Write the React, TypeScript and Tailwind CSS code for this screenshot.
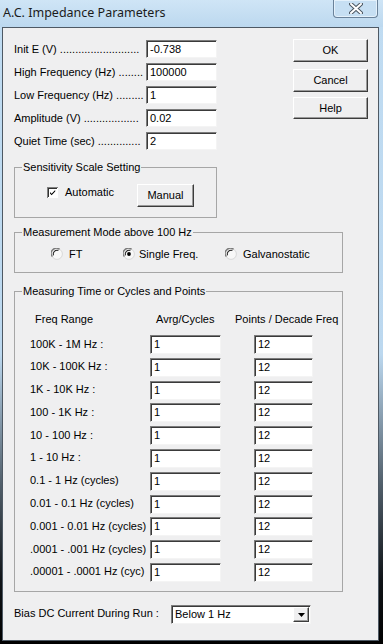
import React, { FC } from 'react';

const sunken =
    'bg-white border border-t-[#7c7c7c] border-l-[#7c7c7c] border-b-[#f4f4f4] border-r-[#f4f4f4] shadow-[inset_1px_1px_0_#3a3a3a]';
const raised =
    'border border-t-white border-l-white border-b-[#3c3c3c] border-r-[#3c3c3c] shadow-[inset_-1px_-1px_0_#9a9a9a]';

const Field: FC<{ value: string; className: string }> = ({ value, className }) => (
    <div className={`${sunken} ${className} h-[19px] flex items-center pl-[3px] text-[11px] leading-none text-black`}>{value}</div>
);

const Button: FC<{ label: string; className: string }> = ({ label, className }) => (
    <div className={`${raised} ${className} flex items-center justify-center text-[11px] text-black bg-[#efeff0]`}>{label}</div>
);

const Radio: FC<{ checked?: boolean }> = ({ checked }) => (
    <svg width="12" height="12" viewBox="0 0 12 12" className="shrink-0">
        <circle cx="6" cy="6" r="5.4" fill="#f8f8f8" stroke="#d8d8d8" strokeWidth="1" />
        <path d="M1.3 8.6 A5.2 5.2 0 0 1 8.6 1.3" fill="none" stroke="#7a7a7a" strokeWidth="1.3" />
        <path d="M2.4 7.4 A4 4 0 0 1 7.4 2.4" fill="none" stroke="#202020" strokeWidth="1.1" />
        {checked && <circle cx="6" cy="6" r="1.9" fill="#000" />}
    </svg>
);

const Checkbox: FC = () => (
    <svg width="11" height="11" viewBox="0 0 11 11" className="shrink-0">
        <rect x="0" y="0" width="11" height="11" fill="#808080" />
        <rect x="1" y="1" width="10" height="10" fill="#ffffff" />
        <rect x="1" y="1" width="9" height="9" fill="#303030" />
        <rect x="2" y="2" width="8" height="8" fill="#ffffff" />
        <path d="M3 5 L4.6 6.7 L8.2 3 L8.2 4.6 L4.6 8.3 L3 6.6 Z" fill="#000" />
    </svg>
);

const Legend: FC<{ text: string }> = ({ text }) => (
    <legend className="ml-[7px] px-[1px] text-[11px] leading-[14px] text-black whitespace-nowrap">{text}</legend>
);

const topRows = [
    ['Init E (V)', '-0.738', 26],
    ['High Frequency (Hz)', '100000', 8],
    ['Low Frequency (Hz)', '1', 9],
    ['Amplitude (V)', '0.02', 18],
    ['Quiet Time (sec)', '2', 14],
] as const;

const freqRows = [
    '100K - 1M Hz :',
    '10K - 100K Hz :',
    '1K - 10K Hz :',
    '100 - 1K Hz :',
    '10 - 100 Hz :',
    '1 - 10 Hz :',
    '0.1 - 1 Hz (cycles)',
    '0.01 - 0.1 Hz (cycles)',
    '0.001 - 0.01 Hz (cycles)',
    '.0001 - .001 Hz (cycles)',
    '.00001 - .0001 Hz (cyc)',
];

export default function App() {
    return (
        <div
            className="w-[383px] h-[644px] overflow-hidden bg-[linear-gradient(180deg,#c0dcf2_0%,#bcd8ef_55%,#52606c_75%,#101418_90%,#000_100%)]"
            style={{ fontFamily: '"Liberation Sans", Arial, sans-serif' }}
        >
            {/* title bar */}
            <div className="h-[27px] flex items-start bg-[linear-gradient(180deg,#cfe5f6,#bcd8ef)]">
                <div
                    className="pl-[3px] pt-[4px] text-[12.5px] leading-[17px] text-[#1b1b1b]"
                    style={{ fontFamily: '"Noto Sans", "Open Sans", sans-serif' }}
                >
                    A.C. Impedance Parameters
                </div>
                <div className="ml-auto mr-[5px] w-[45px] h-[18px] rounded-b-[4px] border border-t-0 border-[#6a829a] bg-[#c6dff3] shadow-[inset_0_0_0_1px_#e4f1fb] flex items-center justify-center">
                    <svg width="14" height="11" viewBox="0 0 14 11">
                        <path d="M2 1 L12 10 M12 1 L2 10" stroke="#4a5560" strokeWidth="4" strokeLinecap="round" />
                        <path d="M2 1 L12 10 M12 1 L2 10" stroke="#ffffff" strokeWidth="2" strokeLinecap="round" />
                    </svg>
                </div>
            </div>

            {/* client area */}
            <div className="ml-[2px] w-[377px] h-[614px] border border-[#4e5964] bg-[#efeff0] pl-[11px] text-black text-[11px]">
                {/* top fields + buttons */}
                <div className="mt-[11px] flex">
                    <div className="pt-[1px] flex flex-col gap-[5px]">
                        {topRows.map(([label, value, n]) => (
                            <div key={label} className="flex items-center h-[18px]">
                                <div className="w-[132px] whitespace-nowrap leading-[14px]">
                                    {label} {'.'.repeat(n)}
                                </div>
                                <Field value={value} className="w-[71px] !h-[18px]" />
                            </div>
                        ))}
                    </div>
                    <div className="ml-[76px] flex flex-col">
                        <Button label="OK" className="w-[75px] h-[23px]" />
                        <Button label="Cancel" className="w-[75px] h-[23px] mt-[7px]" />
                        <Button label="Help" className="w-[75px] h-[22px] mt-[5px]" />
                    </div>
                </div>

                {/* sensitivity */}
                <fieldset className="mt-[10px] w-[203px] h-[58px] border border-[#a6a6a6]">
                    <Legend text="Sensitivity Scale Setting" />
                    <div className="mt-[10px] flex items-start h-[23px]">
                        <div className="ml-[32px] mt-[3px]">
                            <Checkbox />
                        </div>
                        <div className="ml-[7px] w-[72px] mt-[1px] leading-[14px]">Automatic</div>
                        <Button label="Manual" className="w-[57px] h-[23px]" />
                    </div>
                </fieldset>

                {/* measurement mode */}
                <fieldset className="mt-[7px] w-[329px] h-[48px] border border-[#a6a6a6]">
                    <Legend text="Measurement Mode above 100 Hz" />
                    <div className="mt-[8px] h-[14px] flex items-center">
                        <div className="ml-[36px] w-[72px] flex items-center gap-[6px]">
                            <Radio />
                            <span className="leading-[14px]">FT</span>
                        </div>
                        <div className="w-[102px] flex items-center gap-[4px]">
                            <Radio checked />
                            <span className="leading-[14px]">Single Freq.</span>
                        </div>
                        <div className="flex items-center gap-[6px]">
                            <Radio />
                            <span className="leading-[14px]">Galvanostatic</span>
                        </div>
                    </div>
                </fieldset>

                {/* measuring time */}
                <fieldset className="mt-[11px] w-[329px] h-[308px] border border-[#a6a6a6]">
                    <Legend text="Measuring Time or Cycles and Points" />
                    <div className="mt-[14px] h-[14px] flex items-center leading-[14px] whitespace-nowrap">
                        <span className="w-[141px] pl-[20px]">Freq Range</span>
                        <span className="w-[79px]">Avrg/Cycles</span>
                        <span>Points / Decade Freq</span>
                    </div>
                    <div className="mt-[9px] flex flex-col gap-[3.8px]">
                        {freqRows.map((label) => (
                            <div key={label} className="flex items-center h-[19px]">
                                <div className="w-[135px] pl-[15px] whitespace-nowrap leading-[14px] -mt-[2px]">{label}</div>
                                <Field value="1" className="w-[71px]" />
                                <Field value="12" className="w-[59px] ml-[33px]" />
                            </div>
                        ))}
                    </div>
                </fieldset>

                {/* bias */}
                <div className="mt-[13px] flex items-center">
                    <div className="w-[157px] leading-[14px] -mt-[3px]">Bias DC Current During Run :</div>
                    <div className={`${sunken} w-[140px] h-[19px] flex items-center`}>
                        <span className="pl-[3px] flex-1 leading-none">Below 1 Hz</span>
                        <div className={`${raised} w-[16px] h-[15px] mr-[1px] bg-[#efeff0] flex items-center justify-center`}>
                            <svg width="7" height="4" viewBox="0 0 7 4">
                                <path d="M0 0 H7 L3.5 4 Z" fill="#000" />
                            </svg>
                        </div>
                    </div>
                </div>
            </div>
        </div>
    );
}
